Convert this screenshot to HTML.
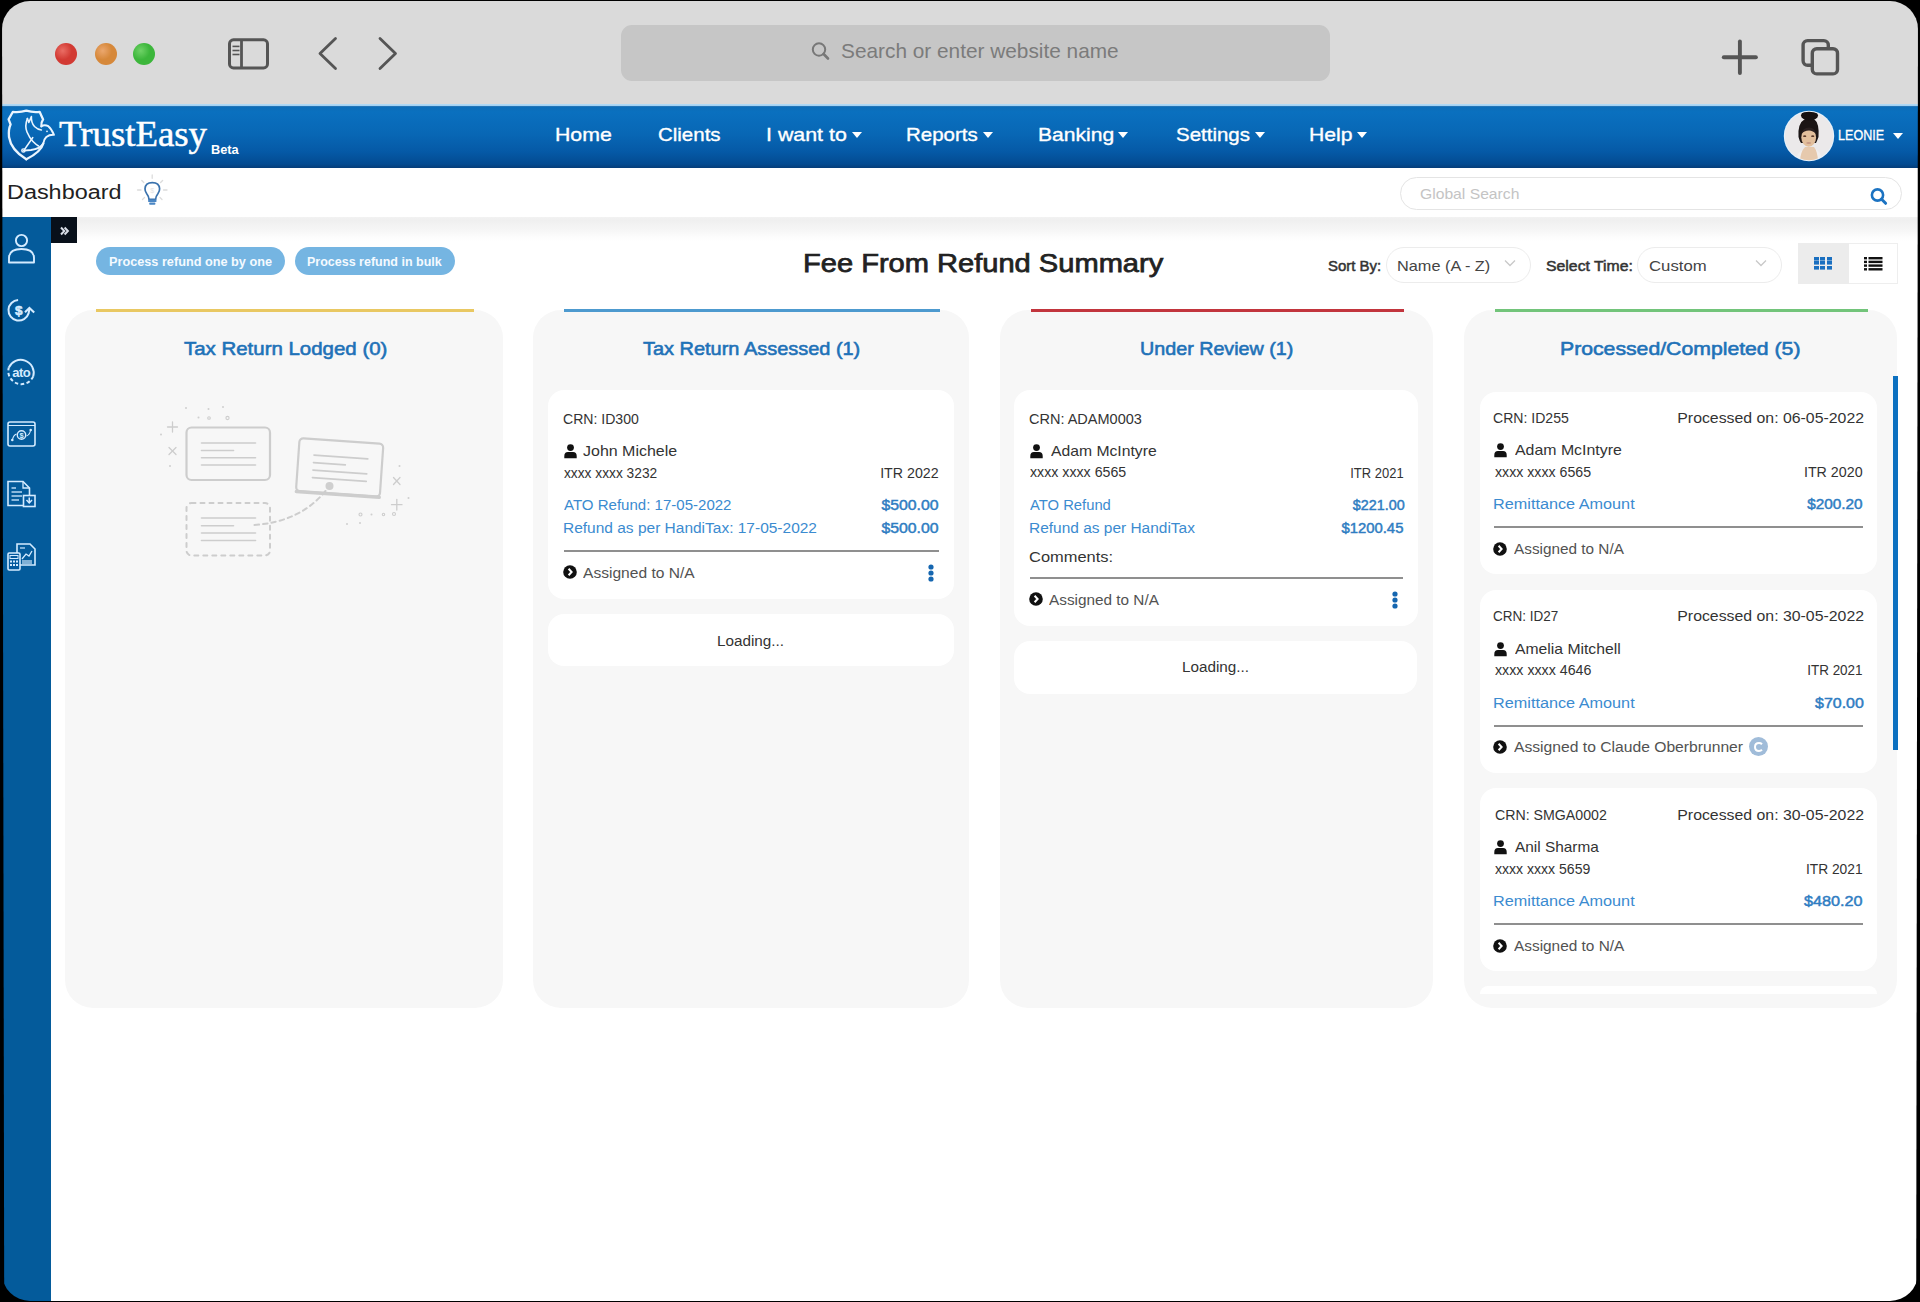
<!DOCTYPE html>
<html><head><meta charset="utf-8"><title>TrustEasy - Fee From Refund Summary</title>
<style>
html,body{margin:0;padding:0;}
body{width:1920px;height:1302px;overflow:hidden;background:#000;position:relative;font-family:"Liberation Sans",sans-serif;}
.screen{position:absolute;left:0;top:0;width:1920px;height:1302px;overflow:hidden;background:#fff;}
.frame{position:absolute;left:2px;top:1px;width:1916px;height:1300px;border-radius:28px;box-shadow:0 0 0 60px #000;z-index:50;}
.abs{position:absolute;}
.tx{position:absolute;white-space:nowrap;line-height:normal;}
.chrome{position:absolute;left:0;top:0;width:1920px;height:104px;background:#dadada;}
.nav{position:absolute;left:0;top:104px;width:1920px;height:63.5px;background:linear-gradient(#b4dbf5 0px,#a4d2f2 1.5px,#2a78b8 2.2px,#0b6db8 3.5px,#0a70bf 8px,#0867b5 30px,#0559a6 48px,#034b91 60px,#053f7c 63.5px);}
.side{position:absolute;left:0;top:217px;width:51px;height:1100px;background:#045b9b;}
.panel{position:absolute;background:#f7f7f7;border-radius:28px;}
.card{position:absolute;background:#fff;border-radius:16px;}
.topline{position:absolute;height:3px;}
.div{position:absolute;height:2px;background:#8f8f8f;}
</style></head><body>
<div class="screen">

<div class="chrome"></div>
<div class="abs" style="left:55.0px;top:42.5px;width:22px;height:22px;border-radius:50%;background:radial-gradient(circle at 35% 35%,#ea6d64 0,#d23a33 45%,#d23a33 100%);"></div>
<div class="abs" style="left:94.5px;top:42.5px;width:22px;height:22px;border-radius:50%;background:radial-gradient(circle at 35% 35%,#eba76e 0,#d6883a 45%,#d6883a 100%);"></div>
<div class="abs" style="left:133.0px;top:42.5px;width:22px;height:22px;border-radius:50%;background:radial-gradient(circle at 35% 35%,#6fd267 0,#3cb63b 45%,#3cb63b 100%);"></div>
<svg class="abs" style="left:224px;top:35px" width="50" height="40" viewBox="0 0 50 40">
<rect x="5.5" y="4.8" width="38" height="28.1" rx="4" fill="none" stroke="#555" stroke-width="3"/>
<line x1="17.5" y1="4.8" x2="17.5" y2="32.9" stroke="#555" stroke-width="2.8"/>
<line x1="8.5" y1="11.4" x2="15.5" y2="11.4" stroke="#555" stroke-width="1.6"/>
<line x1="8.5" y1="15.5" x2="15.5" y2="15.5" stroke="#555" stroke-width="1.6"/>
<line x1="8.5" y1="19.5" x2="15.5" y2="19.5" stroke="#555" stroke-width="1.6"/>
</svg>
<svg class="abs" style="left:310px;top:30px" width="100" height="46" viewBox="0 0 100 46">
<polyline points="25.5,8.5 10,23.5 25.5,38.5" fill="none" stroke="#555" stroke-width="2.8" stroke-linecap="round" stroke-linejoin="round"/>
<polyline points="70,8.5 85.5,23.5 70,38.5" fill="none" stroke="#555" stroke-width="2.8" stroke-linecap="round" stroke-linejoin="round"/>
</svg>
<div class="abs" style="left:621px;top:24.5px;width:709px;height:56px;border-radius:11px;background:#c6c6c6;"></div>
<svg class="abs" style="left:808px;top:40px" width="26" height="22" viewBox="0 0 26 22">
<circle cx="11" cy="9.5" r="6.2" fill="none" stroke="#777" stroke-width="2"/>
<line x1="15.6" y1="14" x2="20" y2="18.5" stroke="#777" stroke-width="2.6" stroke-linecap="round"/>
</svg>
<div id="t0" class="tx" style="left:841.00px;transform-origin:0 0;transform:scaleX(0.9912);top:39.40px;font-size:21px;color:#7b7b7b;font-weight:400;font-family:'Liberation Sans', sans-serif;">Search or enter website name</div>
<svg class="abs" style="left:1714px;top:34px" width="140" height="48" viewBox="0 0 140 48">
<line x1="25.9" y1="7.5" x2="25.9" y2="39" stroke="#555" stroke-width="3.9" stroke-linecap="round"/>
<line x1="9.8" y1="23.3" x2="41.9" y2="23.3" stroke="#555" stroke-width="3.9" stroke-linecap="round"/>
<rect x="89.1" y="6.6" width="25.2" height="24.7" rx="4.5" fill="none" stroke="#555" stroke-width="3.4"/>
<rect x="98.3" y="14.7" width="25.2" height="25.2" rx="4.5" fill="#dadada" stroke="#555" stroke-width="3.4"/>
</svg>
<div class="nav"></div>
<svg class="abs" style="left:4px;top:106px" width="56" height="58" viewBox="4 106 56 58">
<g fill="none" stroke="#eaf5ff" stroke-linejoin="round" stroke-linecap="round">
<path d="M26.3,159.2 Q11,150 9,137 Q8.3,129 10.6,124.5 L8.6,119.4 L12.9,111.8 Q20,112.6 26.3,110.6 Q33,112.6 39.6,111.8 L43.1,119.4 Q40.8,122.5 41.4,126.3" stroke-width="2.3"/>
<path d="M43.3,143.5 Q41,152 26.3,159.2" stroke-width="2.3"/>
<path d="M41.4,126.3 Q44.5,124.2 48.3,126.2 Q51.5,128.8 54,134.8 Q49.5,134.5 46.3,137 Q43.6,139.5 43.3,143.5 Q40,149 31,150 L23.5,150.6" stroke-width="1.9"/>
<path d="M27.4,118.5 Q24.5,126 27,132 Q29.5,138 33,141.5 Q36.5,145 38.5,146" stroke-width="1.6"/>
<path d="M27.4,118.5 L28.8,122.5 L31.4,116.6 Q31,122.5 34.5,126.5 Q37.5,129.5 41.4,130" stroke-width="1.6"/>
<path d="M32.8,137.5 L24.5,149.5" stroke-width="1.5"/>
<circle cx="23.4" cy="150.5" r="1.6" stroke-width="1.4"/>
</g>
<circle cx="47" cy="131.3" r="0.9" fill="#eaf5ff"/>
</svg>
<div id="t1" class="tx" style="left:59.00px;transform-origin:0 0;transform:scaleX(1.0230);top:113.00px;font-size:36px;color:#fff;font-weight:400;font-family:'Liberation Serif', serif;-webkit-text-stroke:0.5px #fff;">TrustEasy</div>
<div id="t2" class="tx" style="left:211.00px;transform-origin:0 0;transform:scaleX(1.0646);top:143.00px;font-size:12px;color:#fff;font-weight:700;font-family:'Liberation Sans', sans-serif;">Beta</div>
<div id="t3" class="tx" style="left:554.88px;transform-origin:0 0;transform:scaleX(1.1202);top:124.00px;font-size:19px;color:#ffffff;font-weight:400;font-family:'Liberation Sans', sans-serif;-webkit-text-stroke:0.35px #fff;">Home</div>
<div id="t4" class="tx" style="left:658.00px;transform-origin:0 0;transform:scaleX(1.0771);top:124.00px;font-size:19px;color:#ffffff;font-weight:400;font-family:'Liberation Sans', sans-serif;-webkit-text-stroke:0.35px #fff;">Clients</div>
<div id="t5" class="tx" style="left:765.88px;transform-origin:0 0;transform:scaleX(1.1250);top:124.00px;font-size:19px;color:#ffffff;font-weight:400;font-family:'Liberation Sans', sans-serif;-webkit-text-stroke:0.35px #fff;">I want to</div>
<div id="t6" class="tx" style="left:905.92px;transform-origin:0 0;transform:scaleX(1.0767);top:124.00px;font-size:19px;color:#ffffff;font-weight:400;font-family:'Liberation Sans', sans-serif;-webkit-text-stroke:0.35px #fff;">Reports</div>
<div id="t7" class="tx" style="left:1038.09px;transform-origin:0 0;transform:scaleX(1.1095);top:124.00px;font-size:19px;color:#ffffff;font-weight:400;font-family:'Liberation Sans', sans-serif;-webkit-text-stroke:0.35px #fff;">Banking</div>
<div id="t8" class="tx" style="left:1176.40px;transform-origin:0 0;transform:scaleX(1.0773);top:124.00px;font-size:19px;color:#ffffff;font-weight:400;font-family:'Liberation Sans', sans-serif;-webkit-text-stroke:0.35px #fff;">Settings</div>
<div id="t9" class="tx" style="left:1309.08px;transform-origin:0 0;transform:scaleX(1.1157);top:124.00px;font-size:19px;color:#ffffff;font-weight:400;font-family:'Liberation Sans', sans-serif;-webkit-text-stroke:0.35px #fff;">Help</div>
<div class="abs" style="left:851.5px;top:131.5px;width:0;height:0;border-left:5.0px solid transparent;border-right:5.0px solid transparent;border-top:6.2px solid #fff;"></div>
<div class="abs" style="left:982.5px;top:131.5px;width:0;height:0;border-left:5.2px solid transparent;border-right:5.2px solid transparent;border-top:6.2px solid #fff;"></div>
<div class="abs" style="left:1117.9px;top:131.5px;width:0;height:0;border-left:5.5px solid transparent;border-right:5.5px solid transparent;border-top:6.2px solid #fff;"></div>
<div class="abs" style="left:1254.5px;top:131.5px;width:0;height:0;border-left:5.2px solid transparent;border-right:5.2px solid transparent;border-top:6.2px solid #fff;"></div>
<div class="abs" style="left:1356.5px;top:131.5px;width:0;height:0;border-left:5.8px solid transparent;border-right:5.8px solid transparent;border-top:6.2px solid #fff;"></div>
<svg class="abs" style="left:1783px;top:109.5px" width="52" height="52" viewBox="0 0 52 52">
<defs><clipPath id="av"><circle cx="26" cy="26" r="24.2"/></clipPath></defs>
<circle cx="26" cy="26" r="25.2" fill="#e6f2fc"/>
<g clip-path="url(#av)">
<rect width="52" height="52" fill="#ebe9ea"/>
<path d="M12,54 Q13,41 24,38 L30,38 Q39,41 40,54 Z" fill="#f1eeee"/>
<path d="M17,54 Q17,42 22,37 L31,37 Q35,42 35,54 Z" fill="#e6c9ad"/>
<path d="M15.5,27 Q14.5,13 22,9 Q26,6 31,9 Q36.5,13 35.5,27 Q34,31 33,33 L18,33 Q16.5,31 15.5,27 Z" fill="#1b1515"/>
<ellipse cx="26.5" cy="5.5" rx="8.5" ry="5" fill="#161111"/>
<ellipse cx="25.7" cy="27.5" rx="7.4" ry="9.3" fill="#e2bf9c"/>
<path d="M18.3,24 Q19.5,17.5 26,17.5 Q32,17.5 33.2,24 Q30,20.5 26,20.5 Q21,20.5 18.3,24 Z" fill="#2a2020"/>
<ellipse cx="21.7" cy="26.2" rx="1.6" ry="0.9" fill="#5a3a2a"/><ellipse cx="29.7" cy="26.2" rx="1.6" ry="0.9" fill="#5a3a2a"/>
<ellipse cx="25.7" cy="33" rx="2.5" ry="1" fill="#c99a86"/>
</g></svg>
<div id="t10" class="tx" style="left:1838.10px;transform-origin:0 0;transform:scaleX(0.8998);top:127.00px;font-size:14px;color:#fff;font-weight:400;font-family:'Liberation Sans', sans-serif;-webkit-text-stroke:0.3px #fff;">LEONIE</div>
<div class="abs" style="left:1892.5px;top:132.5px;width:0;height:0;border-left:5.8px solid transparent;border-right:5.8px solid transparent;border-top:6px solid #fff;"></div>
<div id="t11" class="tx" style="left:6.83px;transform-origin:0 0;transform:scaleX(1.1702);top:181.00px;font-size:20px;color:#222;font-weight:400;font-family:'Liberation Sans', sans-serif;">Dashboard</div>
<svg class="abs" style="left:125px;top:170px" width="55" height="45" viewBox="125 170 55 45">
<g stroke="#dcdcdc" stroke-width="1.3" stroke-linecap="round">
<line x1="152.2" y1="175" x2="152.2" y2="178.3"/><line x1="141.8" y1="180.5" x2="143.8" y2="182.5"/><line x1="162.6" y1="180.5" x2="160.6" y2="182.5"/>
<line x1="137.5" y1="190" x2="141" y2="190"/><line x1="163.5" y1="190" x2="167" y2="190"/><line x1="142.5" y1="199.5" x2="144.5" y2="197.5"/><line x1="162" y1="199.5" x2="160" y2="197.5"/></g>
<path d="M149,199.3 Q148.6,196.2 146.6,193.6 Q144.9,191.2 145,188.8 Q145.3,182.6 152.3,182.6 Q159.3,182.6 159.6,188.8 Q159.7,191.2 158,193.6 Q156,196.2 155.6,199.3 Z" fill="none" stroke="#3a72ad" stroke-width="1.7"/>
<rect x="148.2" y="199.6" width="8.2" height="2.4" fill="#4a86c4"/><rect x="149.2" y="202.6" width="6.2" height="2.2" rx="0.8" fill="#4a86c4"/>
<text x="152.3" y="193.3" font-size="7" text-anchor="middle" fill="#e2e2e2" font-family="Liberation Sans">$</text>
</svg>
<div class="abs" style="left:1399.5px;top:177.3px;width:502.5px;height:33px;border:1px solid #e4e4e4;border-radius:18px;box-sizing:border-box;background:#fff;"></div>
<div id="t12" class="tx" style="left:1420.00px;transform-origin:0 0;transform:scaleX(1.0454);top:184.70px;font-size:15px;color:#c4c4c4;font-weight:400;font-family:'Liberation Sans', sans-serif;">Global Search</div>
<svg class="abs" style="left:1867px;top:184.5px" width="24" height="22" viewBox="0 0 24 22">
<circle cx="10.5" cy="10" r="5.6" fill="none" stroke="#1b73c2" stroke-width="2.6"/>
<line x1="14.6" y1="14.3" x2="18.6" y2="18.3" stroke="#1b73c2" stroke-width="3" stroke-linecap="round"/>
</svg>
<div class="abs" style="left:51px;top:217px;width:1869px;height:24px;background:linear-gradient(#f2f2f2 0%,#efefef 15%,#f2f2f2 30%,#f5f5f5 50%,#f9f9f9 68%,#fdfdfd 85%,#ffffff 100%);"></div>
<div class="side"></div>
<div class="abs" style="left:51px;top:217px;width:26px;height:26px;background:#08101a;"></div>
<svg class="abs" style="left:57px;top:224px" width="14" height="13" viewBox="0 0 14 13">
<polyline points="4,3.5 7.3,7 4,10.5" fill="none" stroke="#d8dde6" stroke-width="2"/>
<polyline points="7.6,3.5 10.9,7 7.6,10.5" fill="none" stroke="#d8dde6" stroke-width="2"/>
</svg>
<svg class="abs" style="left:3px;top:228px" width="36" height="40" viewBox="0 0 36 40">
<circle cx="18.5" cy="12.5" r="5.6" fill="none" stroke="#d4ebff" stroke-width="1.9"/>
<path d="M6,34.5 L6,30 Q6,21 18.5,21 Q31,21 31,30 L31,34.5 Z" fill="none" stroke="#d4ebff" stroke-width="1.9" stroke-linejoin="round"/>
</svg>
<svg class="abs" style="left:3px;top:294px" width="36" height="34" viewBox="0 0 36 34">
<path d="M15.1,6 A10.3,10.3 0 1 0 25.6,19.4 L26.4,14.6" fill="none" stroke="#d4ebff" stroke-width="2"/>
<polyline points="22,18.3 26.4,14 31.2,18.6" fill="none" stroke="#d4ebff" stroke-width="2.1" stroke-linejoin="miter"/>
<text x="15.8" y="20.8" font-size="13.5" font-weight="700" text-anchor="middle" fill="#d4ebff" stroke="#d4ebff" stroke-width="0.6" font-family="Liberation Sans">$</text>
</svg>
<svg class="abs" style="left:3px;top:355px" width="36" height="34" viewBox="0 0 36 34">
<path d="M5.8,12.6 A13,13 0 0 1 30.2,21.4" fill="none" stroke="#d4ebff" stroke-width="2"/>
<path d="M30.2,21.4 A13,13 0 0 1 5.8,12.6" fill="none" stroke="#d4ebff" stroke-width="2" stroke-dasharray="3.6 2.4"/>
<text x="18.2" y="21.5" font-size="13" font-weight="700" text-anchor="middle" fill="#d4ebff" font-family="Liberation Sans" letter-spacing="-0.5">ato</text>
</svg>
<svg class="abs" style="left:3px;top:418px" width="36" height="32" viewBox="0 0 36 32">
<rect x="5" y="4" width="27" height="24" rx="2" fill="none" stroke="#d4ebff" stroke-width="1.6"/>
<line x1="5" y1="7.5" x2="32" y2="7.5" stroke="#d4ebff" stroke-width="1"/>
<circle cx="18.5" cy="17" r="4.2" fill="none" stroke="#d4ebff" stroke-width="1.4"/>
<text x="18.5" y="20" font-size="7.5" font-weight="700" text-anchor="middle" fill="#d4ebff" font-family="Liberation Sans">$</text>
<path d="M9.5,21.5 Q10.5,17 13.5,16 M23.5,18 Q26.5,17 27.5,12.5" fill="none" stroke="#d4ebff" stroke-width="1.1"/>
<circle cx="9.3" cy="22" r="1.3" fill="#d4ebff"/><circle cx="27.7" cy="12" r="1.3" fill="#d4ebff"/>
</svg>
<svg class="abs" style="left:3px;top:478px" width="36" height="34" viewBox="0 0 36 34">
<path d="M21,27.5 L5,27.5 L5,3.5 L20,3.5 L26.5,10 L26.5,17" fill="none" stroke="#d4ebff" stroke-width="1.6"/>
<path d="M20,3.5 L20,10 L26.5,10" fill="none" stroke="#d4ebff" stroke-width="1.3"/>
<g stroke="#d4ebff" stroke-width="1.3"><line x1="8.5" y1="10" x2="13" y2="10"/><line x1="8.5" y1="14" x2="19" y2="14"/><line x1="8.5" y1="18" x2="19" y2="18"/><line x1="8.5" y1="22" x2="16" y2="22"/></g>
<rect x="20.5" y="17.5" width="11.5" height="11" fill="#045a9f" stroke="#d4ebff" stroke-width="1.6"/>
<polyline points="23.5,22 26.25,25 29,22" fill="none" stroke="#d4ebff" stroke-width="1.5"/><line x1="26.25" y1="19.5" x2="26.25" y2="25" stroke="#d4ebff" stroke-width="1.5"/>
</svg>
<svg class="abs" style="left:3px;top:540px" width="36" height="34" viewBox="0 0 36 34">
<path d="M14,4 L27,4 L32,9 L32,25 L14,25 Z" fill="none" stroke="#d4ebff" stroke-width="1.6"/>
<path d="M19,19 L23,14 L26,16 L29,11" fill="none" stroke="#d4ebff" stroke-width="1.3"/>
<g stroke="#d4ebff" stroke-width="1.2"><line x1="19" y1="21" x2="29" y2="21"/><line x1="19" y1="23" x2="29" y2="23"/><line x1="17" y1="8" x2="22" y2="8"/></g>
<rect x="5" y="13" width="12" height="17" rx="1.2" fill="#045a9f" stroke="#d4ebff" stroke-width="1.6"/>
<rect x="7" y="15.5" width="8" height="3" fill="none" stroke="#d4ebff" stroke-width="1"/>
<g fill="#d4ebff"><rect x="7" y="20.5" width="2" height="2"/><rect x="10" y="20.5" width="2" height="2"/><rect x="13" y="20.5" width="2" height="2"/>
<rect x="7" y="24" width="2" height="2"/><rect x="10" y="24" width="2" height="2"/><rect x="13" y="24" width="2" height="2"/></g>
</svg>
<div class="abs" style="left:96.0px;top:247px;width:189.0px;height:28px;border-radius:14px;background:#75b5e2;"></div>
<div id="t13" class="tx" style="left:109.00px;transform-origin:0 0;transform:scaleX(1.0156);top:254.80px;font-size:12.5px;color:#f4faff;font-weight:700;font-family:'Liberation Sans', sans-serif;">Process refund one by one</div>
<div class="abs" style="left:295.0px;top:247px;width:159.5px;height:28px;border-radius:14px;background:#75b5e2;"></div>
<div id="t14" class="tx" style="left:307.00px;transform-origin:0 0;top:254.80px;font-size:12.5px;color:#f4faff;font-weight:700;font-family:'Liberation Sans', sans-serif;">Process refund in bulk</div>
<div id="t15" class="tx" style="left:802.76px;transform-origin:0 0;transform:scaleX(1.1180);top:248.00px;font-size:26px;color:#222;font-weight:400;font-family:'Liberation Sans', sans-serif;-webkit-text-stroke:0.75px #222;">Fee From Refund Summary</div>
<div id="t16" class="tx" style="left:1328.00px;transform-origin:0 0;transform:scaleX(0.9969);top:257.00px;font-size:15px;color:#333;font-weight:400;font-family:'Liberation Sans', sans-serif;-webkit-text-stroke:0.5px #333;">Sort By:</div>
<div class="abs" style="left:1386px;top:247px;width:145px;height:36px;border:1px solid #ececec;border-radius:18px;box-sizing:border-box;"></div>
<div id="t17" class="tx" style="left:1396.91px;transform-origin:0 0;transform:scaleX(1.0861);top:257.00px;font-size:15px;color:#444;font-weight:400;font-family:'Liberation Sans', sans-serif;">Name (A - Z)</div>
<div id="t18" class="tx" style="left:1546.00px;transform-origin:0 0;transform:scaleX(1.0536);top:257.00px;font-size:15px;color:#333;font-weight:400;font-family:'Liberation Sans', sans-serif;-webkit-text-stroke:0.5px #333;">Select Time:</div>
<div class="abs" style="left:1637px;top:247px;width:145px;height:36px;border:1px solid #ececec;border-radius:18px;box-sizing:border-box;"></div>
<div id="t19" class="tx" style="left:1649.00px;transform-origin:0 0;transform:scaleX(1.1151);top:257.00px;font-size:15px;color:#444;font-weight:400;font-family:'Liberation Sans', sans-serif;">Custom</div>
<svg class="abs" style="left:1502.5px;top:258px" width="14" height="10" viewBox="0 0 14 10"><polyline points="2,2.5 7,7.5 12,2.5" fill="none" stroke="#c8c8c8" stroke-width="1.3"/></svg>
<svg class="abs" style="left:1753.5px;top:258px" width="14" height="10" viewBox="0 0 14 10"><polyline points="2,2.5 7,7.5 12,2.5" fill="none" stroke="#c8c8c8" stroke-width="1.3"/></svg>
<div class="abs" style="left:1798px;top:242.5px;width:100px;height:41.5px;border:1px solid #eeeeee;box-sizing:border-box;background:#fff;"></div>
<div class="abs" style="left:1798px;top:242.5px;width:51px;height:41.5px;background:#ececec;"></div>
<svg class="abs" style="left:1813px;top:255.5px" width="22" height="16" viewBox="0 0 22 16"><rect x="1" y="1" width="5" height="3.6" fill="#1a6fc0"/><rect x="1" y="5" width="5" height="3.6" fill="#1a6fc0"/><rect x="1" y="10" width="5" height="3.6" fill="#1a6fc0"/><rect x="7" y="1" width="5" height="3.6" fill="#1a6fc0"/><rect x="7" y="5" width="5" height="3.6" fill="#1a6fc0"/><rect x="7" y="10" width="5" height="3.6" fill="#1a6fc0"/><rect x="14" y="1" width="5" height="3.6" fill="#1a6fc0"/><rect x="14" y="5" width="5" height="3.6" fill="#1a6fc0"/><rect x="14" y="10" width="5" height="3.6" fill="#1a6fc0"/></svg>
<svg class="abs" style="left:1863px;top:255.5px" width="22" height="17" viewBox="0 0 22 17"><rect x="1" y="1.0" width="3" height="2.4" fill="#111"/><rect x="5.5" y="1.0" width="14" height="2.4" fill="#111"/><rect x="1" y="4.7" width="3" height="2.4" fill="#111"/><rect x="5.5" y="4.7" width="14" height="2.4" fill="#111"/><rect x="1" y="8.4" width="3" height="2.4" fill="#111"/><rect x="5.5" y="8.4" width="14" height="2.4" fill="#111"/><rect x="1" y="12.1" width="3" height="2.4" fill="#111"/><rect x="5.5" y="12.1" width="14" height="2.4" fill="#111"/></svg>
<div class="panel" style="left:65.0px;top:310px;width:438.0px;height:698px;"></div>
<div class="topline" style="left:95.5px;top:308.5px;width:378.0px;background:#e9c862;"></div>
<div id="t20" class="tx" style="left:184.00px;transform-origin:0 0;transform:scaleX(1.0757);top:338.00px;font-size:19px;color:#1f72b8;font-weight:400;font-family:'Liberation Sans', sans-serif;-webkit-text-stroke:0.6px #1f72b8;">Tax Return Lodged (0)</div>
<div class="panel" style="left:533.0px;top:310px;width:436.0px;height:698px;"></div>
<div class="topline" style="left:563.5px;top:308.5px;width:376.0px;background:#4d9acf;"></div>
<div id="t21" class="tx" style="left:643.00px;transform-origin:0 0;transform:scaleX(1.0497);top:338.00px;font-size:19px;color:#1f72b8;font-weight:400;font-family:'Liberation Sans', sans-serif;-webkit-text-stroke:0.6px #1f72b8;">Tax Return Assessed (1)</div>
<div class="panel" style="left:1000.0px;top:310px;width:433.0px;height:698px;"></div>
<div class="topline" style="left:1030.5px;top:308.5px;width:373.0px;background:#c2353d;"></div>
<div id="t22" class="tx" style="left:1139.96px;transform-origin:0 0;transform:scaleX(1.0376);top:338.00px;font-size:19px;color:#1f72b8;font-weight:400;font-family:'Liberation Sans', sans-serif;-webkit-text-stroke:0.6px #1f72b8;">Under Review (1)</div>
<div class="panel" style="left:1464.0px;top:310px;width:433.0px;height:698px;"></div>
<div class="topline" style="left:1494.5px;top:308.5px;width:373.0px;background:#72c47a;"></div>
<div id="t23" class="tx" style="left:1559.88px;transform-origin:0 0;transform:scaleX(1.1163);top:338.00px;font-size:19px;color:#1f72b8;font-weight:400;font-family:'Liberation Sans', sans-serif;-webkit-text-stroke:0.6px #1f72b8;">Processed/Completed (5)</div>
<svg class="abs" style="left:150px;top:400px" width="270" height="170" viewBox="150 400 270 170">
<g fill="none" stroke="#cdcdcd" stroke-linecap="round">
<rect x="186.5" y="427.5" width="83.5" height="52.5" rx="5" stroke-width="2.2"/>
<g stroke-width="1.6"><line x1="201.5" y1="443" x2="255.5" y2="443"/><line x1="201.5" y1="450.5" x2="233.5" y2="450.5"/><line x1="201.5" y1="457.8" x2="255.5" y2="457.8"/><line x1="201.5" y1="465" x2="255.5" y2="465"/></g>
<rect x="186.5" y="503" width="83.5" height="52.5" rx="5" stroke-width="2" stroke-dasharray="4 5"/>
<g stroke-width="1.6"><line x1="201.5" y1="518" x2="255.5" y2="518"/><line x1="201.5" y1="525.8" x2="233.5" y2="525.8"/><line x1="201.5" y1="533" x2="255.5" y2="533"/><line x1="201.5" y1="540.5" x2="255.5" y2="540.5"/></g>
<g transform="rotate(4 340 470)">
<rect x="297.5" y="441" width="84" height="53" rx="4" stroke-width="2.2"/>
<line x1="298" y1="494.5" x2="381" y2="494.5" stroke-width="3.5"/>
<g stroke-width="1.6"><line x1="313" y1="457" x2="367" y2="457"/><line x1="313" y1="464.5" x2="345" y2="464.5"/><line x1="313" y1="472" x2="367" y2="472"/><line x1="313" y1="479.5" x2="367" y2="479.5"/></g>
</g>
<path d="M325.5,491 Q300,522 254,525" stroke-width="2" stroke-dasharray="4.5 4"/>
<g stroke-width="1.3"><line x1="172.5" y1="422" x2="172.5" y2="432"/><line x1="167.5" y1="427" x2="177.5" y2="427"/>
<line x1="169" y1="447.5" x2="176" y2="454.5"/><line x1="176" y1="447.5" x2="169" y2="454.5"/>
<line x1="396.8" y1="499.5" x2="396.8" y2="510"/><line x1="391.5" y1="504.7" x2="402" y2="504.7"/>
<line x1="393.5" y1="477.5" x2="400" y2="484.5"/><line x1="400" y1="477.5" x2="393.5" y2="484.5"/></g>
<g stroke-width="1.1"><circle cx="209" cy="418" r="1.3"/><circle cx="227.5" cy="418" r="1.6"/><circle cx="394" cy="514" r="1.5"/><circle cx="360.5" cy="514.5" r="1.5"/><circle cx="383.5" cy="514.5" r="1.2"/></g>
</g>
<g fill="#cfcfcf"><circle cx="329.5" cy="486" r="4"/><circle cx="186" cy="408" r="1"/><circle cx="198.5" cy="417.5" r="1"/><circle cx="208.5" cy="409" r="1"/><circle cx="223" cy="407" r="1"/>
<circle cx="161" cy="434.5" r="1"/><circle cx="170" cy="466" r="1"/><circle cx="399.5" cy="466" r="1"/><circle cx="408.5" cy="498" r="1"/><circle cx="371.5" cy="514.5" r="1"/><circle cx="347" cy="524" r="1"/><circle cx="360" cy="523" r="1"/></g>
</svg>
<div class="card" style="left:548.0px;top:390.0px;width:406.0px;height:209.0px;"></div>
<div id="t24" class="tx" style="left:563.00px;transform-origin:0 0;transform:scaleX(1.0049);top:411.00px;font-size:14px;color:#333;font-weight:400;font-family:'Liberation Sans', sans-serif;">CRN: ID300</div>
<svg class="abs" style="left:563.5px;top:443.7px" width="14" height="15" viewBox="0 0 14 15"><circle cx="6.5" cy="3.6" r="3.4" fill="#111"/><path d="M0.3,14.3 L0.3,12 Q0.3,8 4,8 L9,8 Q12.7,8 12.7,12 L12.7,14.3 Z" fill="#111"/></svg>
<div id="t25" class="tx" style="left:583.00px;transform-origin:0 0;transform:scaleX(1.0657);top:442.00px;font-size:15px;color:#333;font-weight:400;font-family:'Liberation Sans', sans-serif;">John Michele</div>
<div id="t26" class="tx" style="left:564.00px;transform-origin:0 0;transform:scaleX(0.9817);top:464.50px;font-size:14px;color:#333;font-weight:400;font-family:'Liberation Sans', sans-serif;">xxxx xxxx 3232</div>
<div id="t27" class="tx" style="right:981.82px;transform-origin:100% 0;transform:scaleX(1.0143);top:465.00px;font-size:14px;color:#333;font-weight:400;font-family:'Liberation Sans', sans-serif;">ITR 2022</div>
<div id="t28" class="tx" style="left:563.75px;transform-origin:0 0;transform:scaleX(1.0741);top:497.30px;font-size:14px;color:#3b8bd0;font-weight:400;font-family:'Liberation Sans', sans-serif;">ATO Refund: 17-05-2022</div>
<div id="t29" class="tx" style="right:981.64px;transform-origin:100% 0;transform:scaleX(1.1300);top:497.00px;font-size:14px;color:#2f7dc2;font-weight:400;font-family:'Liberation Sans', sans-serif;-webkit-text-stroke:0.45px #2f7dc2;">$500.00</div>
<div id="t30" class="tx" style="left:562.64px;transform-origin:0 0;transform:scaleX(1.1062);top:520.40px;font-size:14px;color:#3b8bd0;font-weight:400;font-family:'Liberation Sans', sans-serif;">Refund as per HandiTax: 17-05-2022</div>
<div id="t31" class="tx" style="right:981.64px;transform-origin:100% 0;transform:scaleX(1.1300);top:520.30px;font-size:14px;color:#2f7dc2;font-weight:400;font-family:'Liberation Sans', sans-serif;-webkit-text-stroke:0.45px #2f7dc2;">$500.00</div>
<div class="div" style="left:563.5px;top:550.0px;width:375.2px;"></div>
<svg class="abs" style="left:562.7px;top:565.4px" width="14" height="14" viewBox="0 0 14 14"><circle cx="7" cy="7" r="6.8" fill="#111"/><polyline points="5.6,3.8 8.6,7 5.6,10.2" fill="none" stroke="#fff" stroke-width="2"/></svg>
<div id="t32" class="tx" style="left:583.00px;transform-origin:0 0;transform:scaleX(1.1124);top:565.30px;font-size:14px;color:#525252;font-weight:400;font-family:'Liberation Sans', sans-serif;">Assigned to N/A</div>
<svg class="abs" style="left:927.5px;top:563.5px" width="6" height="18" viewBox="0 0 6 18"><circle cx="3" cy="3" r="2.6" fill="#1566b0"/><circle cx="3" cy="9" r="2.6" fill="#1566b0"/><circle cx="3" cy="15" r="2.6" fill="#1566b0"/></svg>
<div class="card" style="left:548.0px;top:613.5px;width:406.0px;height:52.5px;"></div>
<div id="t33" class="tx" style="left:716.91px;transform-origin:0 0;transform:scaleX(1.0905);top:632.50px;font-size:14px;color:#333;font-weight:400;font-family:'Liberation Sans', sans-serif;">Loading...</div>
<div class="card" style="left:1014.0px;top:390.0px;width:404.0px;height:236.0px;"></div>
<div id="t34" class="tx" style="left:1029.00px;transform-origin:0 0;transform:scaleX(1.0358);top:410.70px;font-size:14px;color:#333;font-weight:400;font-family:'Liberation Sans', sans-serif;">CRN: ADAM0003</div>
<svg class="abs" style="left:1029.5px;top:443.6px" width="14" height="15" viewBox="0 0 14 15"><circle cx="6.5" cy="3.6" r="3.4" fill="#111"/><path d="M0.3,14.3 L0.3,12 Q0.3,8 4,8 L9,8 Q12.7,8 12.7,12 L12.7,14.3 Z" fill="#111"/></svg>
<div id="t35" class="tx" style="left:1050.70px;transform-origin:0 0;transform:scaleX(1.0476);top:441.50px;font-size:15px;color:#333;font-weight:400;font-family:'Liberation Sans', sans-serif;">Adam McIntyre</div>
<div id="t36" class="tx" style="left:1030.00px;transform-origin:0 0;transform:scaleX(1.0133);top:464.00px;font-size:14px;color:#333;font-weight:400;font-family:'Liberation Sans', sans-serif;">xxxx xxxx 6565</div>
<div id="t37" class="tx" style="right:516.90px;transform-origin:100% 0;transform:scaleX(0.9261);top:464.50px;font-size:14px;color:#333;font-weight:400;font-family:'Liberation Sans', sans-serif;">ITR 2021</div>
<div id="t38" class="tx" style="left:1030.00px;transform-origin:0 0;transform:scaleX(1.0563);top:497.00px;font-size:14px;color:#3b8bd0;font-weight:400;font-family:'Liberation Sans', sans-serif;">ATO Refund</div>
<div id="t39" class="tx" style="right:515.62px;transform-origin:100% 0;transform:scaleX(1.0241);top:497.00px;font-size:14px;color:#2f7dc2;font-weight:400;font-family:'Liberation Sans', sans-serif;-webkit-text-stroke:0.45px #2f7dc2;">$221.00</div>
<div id="t40" class="tx" style="left:1028.90px;transform-origin:0 0;transform:scaleX(1.1046);top:520.00px;font-size:14px;color:#3b8bd0;font-weight:400;font-family:'Liberation Sans', sans-serif;">Refund as per HandiTax</div>
<div id="t41" class="tx" style="right:516.93px;transform-origin:100% 0;transform:scaleX(1.0617);top:520.00px;font-size:14px;color:#2f7dc2;font-weight:400;font-family:'Liberation Sans', sans-serif;-webkit-text-stroke:0.45px #2f7dc2;">$1200.45</div>
<div id="t42" class="tx" style="left:1029.00px;transform-origin:0 0;transform:scaleX(1.1747);top:548.50px;font-size:14px;color:#333;font-weight:400;font-family:'Liberation Sans', sans-serif;">Comments:</div>
<div class="div" style="left:1029.5px;top:577.0px;width:373.8px;"></div>
<svg class="abs" style="left:1028.8px;top:592.4px" width="14" height="14" viewBox="0 0 14 14"><circle cx="7" cy="7" r="6.8" fill="#111"/><polyline points="5.6,3.8 8.6,7 5.6,10.2" fill="none" stroke="#fff" stroke-width="2"/></svg>
<div id="t43" class="tx" style="left:1049.20px;transform-origin:0 0;transform:scaleX(1.0945);top:591.80px;font-size:14px;color:#525252;font-weight:400;font-family:'Liberation Sans', sans-serif;">Assigned to N/A</div>
<svg class="abs" style="left:1392.0px;top:590.5px" width="6" height="18" viewBox="0 0 6 18"><circle cx="3" cy="3" r="2.6" fill="#1566b0"/><circle cx="3" cy="9" r="2.6" fill="#1566b0"/><circle cx="3" cy="15" r="2.6" fill="#1566b0"/></svg>
<div class="card" style="left:1014.0px;top:641.0px;width:403.0px;height:52.5px;"></div>
<div id="t44" class="tx" style="left:1181.91px;transform-origin:0 0;transform:scaleX(1.0905);top:658.70px;font-size:14px;color:#333;font-weight:400;font-family:'Liberation Sans', sans-serif;">Loading...</div>
<div class="card" style="left:1480.0px;top:391.8px;width:397.0px;height:182.7px;"></div>
<div id="t45" class="tx" style="left:1493.00px;transform-origin:0 0;transform:scaleX(1.0046);top:410.00px;font-size:14px;color:#333;font-weight:400;font-family:'Liberation Sans', sans-serif;">CRN: ID255</div>
<div id="t46" class="tx" style="right:56.44px;transform-origin:100% 0;transform:scaleX(1.1315);top:410.00px;font-size:14px;color:#333;font-weight:400;font-family:'Liberation Sans', sans-serif;">Processed on: 06-05-2022</div>
<svg class="abs" style="left:1493.7px;top:443.4px" width="14" height="15" viewBox="0 0 14 15"><circle cx="6.5" cy="3.6" r="3.4" fill="#111"/><path d="M0.3,14.3 L0.3,12 Q0.3,8 4,8 L9,8 Q12.7,8 12.7,12 L12.7,14.3 Z" fill="#111"/></svg>
<div id="t47" class="tx" style="left:1514.80px;transform-origin:0 0;transform:scaleX(1.0585);top:441.20px;font-size:15px;color:#333;font-weight:400;font-family:'Liberation Sans', sans-serif;">Adam McIntyre</div>
<div id="t48" class="tx" style="left:1494.50px;transform-origin:0 0;transform:scaleX(1.0122);top:464.00px;font-size:14px;color:#333;font-weight:400;font-family:'Liberation Sans', sans-serif;">xxxx xxxx 6565</div>
<div id="t49" class="tx" style="right:57.82px;transform-origin:100% 0;transform:scaleX(1.0182);top:464.00px;font-size:14px;color:#333;font-weight:400;font-family:'Liberation Sans', sans-serif;">ITR 2020</div>
<div id="t50" class="tx" style="left:1493.34px;transform-origin:0 0;transform:scaleX(1.1594);top:496.30px;font-size:14px;color:#3b8bd0;font-weight:400;font-family:'Liberation Sans', sans-serif;">Remittance Amount</div>
<div id="t51" class="tx" style="right:57.83px;transform-origin:100% 0;transform:scaleX(1.0943);top:496.40px;font-size:14px;color:#2f7dc2;font-weight:400;font-family:'Liberation Sans', sans-serif;-webkit-text-stroke:0.45px #2f7dc2;">$200.20</div>
<div class="div" style="left:1494.0px;top:526.3px;width:369.0px;"></div>
<svg class="abs" style="left:1493.0px;top:541.9px" width="14" height="14" viewBox="0 0 14 14"><circle cx="7" cy="7" r="6.8" fill="#111"/><polyline points="5.6,3.8 8.6,7 5.6,10.2" fill="none" stroke="#fff" stroke-width="2"/></svg>
<div id="t52" class="tx" style="left:1514.00px;transform-origin:0 0;transform:scaleX(1.0945);top:541.00px;font-size:14px;color:#525252;font-weight:400;font-family:'Liberation Sans', sans-serif;">Assigned to N/A</div>
<div class="card" style="left:1480.0px;top:590.1px;width:397.0px;height:182.7px;"></div>
<div id="t53" class="tx" style="left:1493.00px;transform-origin:0 0;transform:scaleX(0.9639);top:608.30px;font-size:14px;color:#333;font-weight:400;font-family:'Liberation Sans', sans-serif;">CRN: ID27</div>
<div id="t54" class="tx" style="right:56.44px;transform-origin:100% 0;transform:scaleX(1.1315);top:608.30px;font-size:14px;color:#333;font-weight:400;font-family:'Liberation Sans', sans-serif;">Processed on: 30-05-2022</div>
<svg class="abs" style="left:1493.7px;top:641.7px" width="14" height="15" viewBox="0 0 14 15"><circle cx="6.5" cy="3.6" r="3.4" fill="#111"/><path d="M0.3,14.3 L0.3,12 Q0.3,8 4,8 L9,8 Q12.7,8 12.7,12 L12.7,14.3 Z" fill="#111"/></svg>
<div id="t55" class="tx" style="left:1514.80px;transform-origin:0 0;transform:scaleX(1.0475);top:639.50px;font-size:15px;color:#333;font-weight:400;font-family:'Liberation Sans', sans-serif;">Amelia Mitchell</div>
<div id="t56" class="tx" style="left:1494.50px;transform-origin:0 0;transform:scaleX(1.0154);top:662.30px;font-size:14px;color:#333;font-weight:400;font-family:'Liberation Sans', sans-serif;">xxxx xxxx 4646</div>
<div id="t57" class="tx" style="right:57.81px;transform-origin:100% 0;transform:scaleX(0.9618);top:662.30px;font-size:14px;color:#333;font-weight:400;font-family:'Liberation Sans', sans-serif;">ITR 2021</div>
<div id="t58" class="tx" style="left:1493.34px;transform-origin:0 0;transform:scaleX(1.1594);top:694.60px;font-size:14px;color:#3b8bd0;font-weight:400;font-family:'Liberation Sans', sans-serif;">Remittance Amount</div>
<div id="t59" class="tx" style="right:56.44px;transform-origin:100% 0;transform:scaleX(1.1398);top:694.70px;font-size:14px;color:#2f7dc2;font-weight:400;font-family:'Liberation Sans', sans-serif;-webkit-text-stroke:0.45px #2f7dc2;">$70.00</div>
<div class="div" style="left:1494.0px;top:724.6px;width:369.0px;"></div>
<svg class="abs" style="left:1493.0px;top:740.2px" width="14" height="14" viewBox="0 0 14 14"><circle cx="7" cy="7" r="6.8" fill="#111"/><polyline points="5.6,3.8 8.6,7 5.6,10.2" fill="none" stroke="#fff" stroke-width="2"/></svg>
<div id="t60" class="tx" style="left:1514.00px;transform-origin:0 0;transform:scaleX(1.1189);top:739.30px;font-size:14px;color:#525252;font-weight:400;font-family:'Liberation Sans', sans-serif;">Assigned to Claude Oberbrunner</div>
<div class="card" style="left:1480.0px;top:788.4px;width:397.0px;height:182.7px;"></div>
<div id="t61" class="tx" style="left:1494.50px;transform-origin:0 0;transform:scaleX(1.0120);top:806.60px;font-size:14px;color:#333;font-weight:400;font-family:'Liberation Sans', sans-serif;">CRN: SMGA0002</div>
<div id="t62" class="tx" style="right:56.44px;transform-origin:100% 0;transform:scaleX(1.1315);top:806.60px;font-size:14px;color:#333;font-weight:400;font-family:'Liberation Sans', sans-serif;">Processed on: 30-05-2022</div>
<svg class="abs" style="left:1493.7px;top:840.0px" width="14" height="15" viewBox="0 0 14 15"><circle cx="6.5" cy="3.6" r="3.4" fill="#111"/><path d="M0.3,14.3 L0.3,12 Q0.3,8 4,8 L9,8 Q12.7,8 12.7,12 L12.7,14.3 Z" fill="#111"/></svg>
<div id="t63" class="tx" style="left:1514.80px;transform-origin:0 0;transform:scaleX(1.0250);top:837.80px;font-size:15px;color:#333;font-weight:400;font-family:'Liberation Sans', sans-serif;">Anil Sharma</div>
<div id="t64" class="tx" style="left:1494.50px;transform-origin:0 0;transform:scaleX(1.0038);top:860.60px;font-size:14px;color:#333;font-weight:400;font-family:'Liberation Sans', sans-serif;">xxxx xxxx 5659</div>
<div id="t65" class="tx" style="right:57.81px;transform-origin:100% 0;transform:scaleX(0.9830);top:860.60px;font-size:14px;color:#333;font-weight:400;font-family:'Liberation Sans', sans-serif;">ITR 2021</div>
<div id="t66" class="tx" style="left:1493.34px;transform-origin:0 0;transform:scaleX(1.1594);top:892.90px;font-size:14px;color:#3b8bd0;font-weight:400;font-family:'Liberation Sans', sans-serif;">Remittance Amount</div>
<div id="t67" class="tx" style="right:57.85px;transform-origin:100% 0;transform:scaleX(1.1577);top:893.00px;font-size:14px;color:#2f7dc2;font-weight:400;font-family:'Liberation Sans', sans-serif;-webkit-text-stroke:0.45px #2f7dc2;">$480.20</div>
<div class="div" style="left:1494.0px;top:922.9px;width:369.0px;"></div>
<svg class="abs" style="left:1493.0px;top:938.5px" width="14" height="14" viewBox="0 0 14 14"><circle cx="7" cy="7" r="6.8" fill="#111"/><polyline points="5.6,3.8 8.6,7 5.6,10.2" fill="none" stroke="#fff" stroke-width="2"/></svg>
<div id="t68" class="tx" style="left:1514.00px;transform-origin:0 0;transform:scaleX(1.0986);top:937.60px;font-size:14px;color:#525252;font-weight:400;font-family:'Liberation Sans', sans-serif;">Assigned to N/A</div>
<div class="abs" style="left:1748.6px;top:737px;width:19.3px;height:19.3px;border-radius:50%;background:#a0bcd9;"></div>
<svg class="abs" style="left:1750.5px;top:738.8px" width="16" height="16" viewBox="0 0 16 16"><path d="M11,5.2 Q9.8,4 8,4 Q4,4 4,8 Q4,12 8,12 Q9.8,12 11,10.8" fill="none" stroke="#fff" stroke-width="2"/></svg>
<div class="abs" style="left:1480px;top:985.5px;width:397px;height:8.5px;background:#fff;border-radius:18px 18px 0 0;"></div>
<div class="abs" style="left:1893px;top:376px;width:5px;height:374px;background:#0c70c0;"></div>
<div class="frame"></div>
<svg class="abs" style="left:0;top:0;z-index:51" width="1920" height="1302"><polygon points="0,0 2,0 4.2,1302 0,1302" fill="#000"/><polygon points="1920,0 1918,0 1916.2,1302 1920,1302" fill="#000"/></svg>
</div></body></html>
